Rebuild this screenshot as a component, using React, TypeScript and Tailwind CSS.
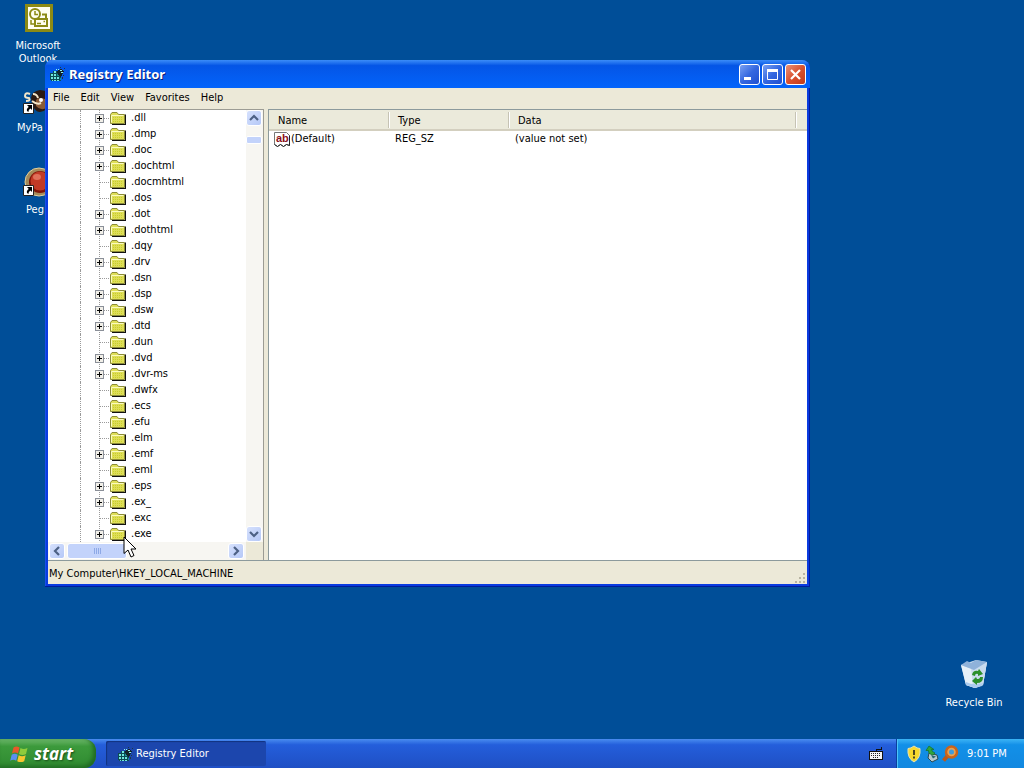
import React from "react";

const keys: [string, boolean][] = [
  [".dll", true],
  [".dmp", true],
  [".doc", true],
  [".dochtml", true],
  [".docmhtml", false],
  [".dos", false],
  [".dot", true],
  [".dothtml", true],
  [".dqy", false],
  [".drv", true],
  [".dsn", false],
  [".dsp", true],
  [".dsw", true],
  [".dtd", true],
  [".dun", false],
  [".dvd", true],
  [".dvr-ms", true],
  [".dwfx", false],
  [".ecs", false],
  [".efu", false],
  [".elm", false],
  [".emf", true],
  [".eml", false],
  [".eps", true],
  [".ex_", true],
  [".exc", false],
  [".exe", true],
];

function RegeditIcon() {
  return (
    <svg width="16" height="16" viewBox="0 0 16 16" shapeRendering="crispEdges">
      <path d="M1 6h3V4h5v2h3v8H2v-1H1z" fill="#0b4b53" />
      <path d="M2 7h2v2H2zM5 7h2v2H5zM2 10h2v2H2zM5 10h2v2H5zM8 10h2v2H8zM3 13h1v1H3zM5 13h2v1H5zM8 13h2v1H8zM5 4h2v2H5z" fill="#6fe6dc" />
      <path d="M8 7h2v2H8zM11 8h1v2h-1zM11 11h1v2h-1z" fill="#168f96" />
      <path d="M8 4l4-2 3 2-2 4-2 2-2-2z" fill="#12232b" />
      <path d="M11 3h2v1h-2zM12 5h2v1h-2zM9 2h1v1H9zM7 2h1v1H7z" fill="#8ff1f0" />
      <path d="M15 1h1v1h-1zM11 0h1v1h-1zM14 8h1v1h-1zM13 10h1v2h-1z" fill="#1d3a44" />
    </svg>
  );
}

function FolderIcon() {
  return (
    <svg width="16" height="16" viewBox="0 0 16 16" className="shrink-0">
      <path d="M2 14.5h13.5V4.5" fill="none" stroke="#111" strokeWidth="1.2" />
      <path d="M.5 13.5v-9l1.5-2h5l1.5 2h6v9z" fill="#dede58" stroke="#8b8b38" />
      <path d="M1.5 12.5v-7h12" fill="none" stroke="#fbfbc0" />
      <path d="M3 7.500h10M3 9.500h10M3 11.500h10" stroke="#c9cf2c" strokeDasharray="1 1" />
    </svg>
  );
}

function Branch({ name, open }: { name: string; open: boolean }) {
  const lines = (
    <svg width="15" height="16" viewBox="0 0 15 16" shapeRendering="crispEdges">
      <path d="M4.500 0v16M5 8.500h10" stroke="#9a9a9a" strokeDasharray="1 1" fill="none" />
      {open && (
        <>
          <rect x="0.500" y="4.500" width="8" height="8" fill="#f1efe8" stroke="#8a8f98" />
          <path d="M2 8.500h5M4.500 6v5" stroke="#000" />
        </>
      )}
    </svg>
  );
  return (
    <li className="flex h-4 items-center">
      <span className="ml-8 h-4 w-[15px] shrink-0 border-l border-dotted border-[#9a9a9a]" />
      {open ? <button aria-label={"Expand " + name}>{lines}</button> : lines}
      <FolderIcon />
      <span className="pl-[5px] leading-4">{name}</span>
    </li>
  );
}

function ScrollButton({ label, d }: { label: string; d: string }) {
  return (
    <button
      aria-label={label}
      className="flex size-4 shrink-0 items-center justify-center rounded-[3px] border border-white bg-linear-to-br from-[#d6e1fd] to-[#b5c8f7]"
    >
      <svg width="10" height="10" viewBox="0 0 10 10">
        <path d={d} fill="none" stroke="#4d6185" strokeWidth="2.200" />
      </svg>
    </button>
  );
}

function CaptionButton({ label, red, children }: { label: string; red?: boolean; children: React.ReactNode }) {
  return (
    <button
      aria-label={label}
      className={
        "flex size-[21px] items-center justify-center rounded-[3px] border border-white bg-linear-to-br " +
        (red ? "from-[#e99076] via-[#d9512f] to-[#c2391a]" : "from-[#7aa0f2] via-[#3467e0] to-[#1f4fd0]")
      }
    >
      <svg width="19" height="19" viewBox="0 0 19 19" fill="none" stroke="#fff">
        {children}
      </svg>
    </button>
  );
}

function Shortcut() {
  return (
    <>
      <path d="M1.500 19.500h10v10h-10z" fill="#fff" stroke="#222" />
      <path d="M5 21h5v5l-1.500-1.500C7 25.500 6.500 26.500 6.500 28 4 27 4.500 24.500 6.800 23z" fill="#000" />
    </>
  );
}

function DesktopIcon({ label, children, cut }: { label: string; children: React.ReactNode; cut?: string }) {
  return (
    <button className="flex h-[82px] w-full flex-col items-center gap-1 pt-[2px] leading-[13px] text-white">
      <svg width="32" height="32" viewBox="0 0 32 32" className="shrink-0">
        {children}
      </svg>
      <span className={cut ? "w-full pt-[1px] text-left " + cut : "w-[70px] pt-[1px] text-center"}>{label}</span>
    </button>
  );
}

function RegistryWindow() {
  return (
    <section className="absolute left-[45px] top-[60px] w-[765px] rounded-t-lg bg-[#0a3be0] px-[3px] pb-[3px] shadow-[inset_-1px_-1px_0_#001c9c,inset_1px_0_0_#1a4fe8]">
      <header className="-mx-[3px] flex h-7 items-center gap-1 rounded-t-lg bg-linear-to-b from-[#3b8cf8] via-[#0455e6] via-20% to-[#0364fb] px-1 pt-[1px]">
        <RegeditIcon />
        <h1 className="flex-1 pt-[1px] font-['Noto_Sans'] text-[13px] font-bold text-white [text-shadow:1px_1px_#0a1f7a]">Registry Editor</h1>
        <div className="flex gap-[2px]">
          <CaptionButton label="Minimize">
            <path d="M4 13.500h7" strokeWidth="3" />
          </CaptionButton>
          <CaptionButton label="Maximize">
            <path d="M4.500 5v9.500h10V5" />
            <path d="M4 5.500h11" strokeWidth="3" />
          </CaptionButton>
          <CaptionButton label="Close" red>
            <path d="M5 5l9 9M14 5l-9 9" strokeWidth="2.200" />
          </CaptionButton>
        </div>
      </header>

      <div className="bg-[#ece9d8]">
        <nav className="flex h-[21px] items-center gap-[11px] px-[5px]">
          {["File", "Edit", "View", "Favorites", "Help"].map((m) => (
            <button key={m}>{m}</button>
          ))}
        </nav>

        <div className="flex gap-1 border-b border-[#8c9a9c]">
          <div className="w-[216px] border-r border-t border-[#9c9c94] bg-white">
            <div className="flex">
              <ul className="flex-1 overflow-hidden">
                {keys.map(([name, open]) => (
                  <Branch key={name} name={name} open={open} />
                ))}
              </ul>
              <div className="flex w-[17px] flex-col bg-[#f7f6f2]">
                <ScrollButton label="Scroll up" d="M1 7l4-4 4 4" />
                <div className="flex-1 pt-[10px]">
                  <div className="h-2 w-4 rounded-[2px] border border-white bg-[#c3d3fb]" />
                </div>
                <ScrollButton label="Scroll down" d="M1 3l4 4 4-4" />
              </div>
            </div>
            <div className="flex h-[18px]">
              <div className="flex flex-1 items-center bg-[#f7f6f2] pl-[1px] pr-[2px]">
                <ScrollButton label="Scroll left" d="M7 1L3 5l4 4" />
                <div className="ml-[2px] flex h-4 w-[60px] items-center justify-center gap-[1px] rounded-[3px] border border-white bg-[#c3d3fb]">
                  {[0, 1, 2, 3].map((i) => (
                    <span key={i} className="h-[6px] w-[1px] bg-[#8ea9e6]" />
                  ))}
                </div>
                <span className="flex-1" />
                <ScrollButton label="Scroll right" d="M3 1l4 4-4 4" />
              </div>
              <div className="w-[17px] bg-[#ece9d8]" />
            </div>
          </div>

          <div className="flex-1 border-l border-t border-[#8c9a9c] bg-white">
            <table className="w-full table-fixed">
              <colgroup>
                <col className="w-[120px]" />
                <col className="w-[120px]" />
                <col />
                <col className="w-[11px]" />
              </colgroup>
              <thead>
                <tr className="h-5 border-b-2 border-[#d3cfbf] bg-[#ebeadb] text-left">
                  {["Name", "Type", "Data"].map((h) => (
                    <th key={h} scope="col" className="p-0 font-normal">
                      <div className="h-4 border-r border-[#c6c3b4] pl-[9px] leading-[17px] shadow-[1px_0_#fff]">{h}</div>
                    </th>
                  ))}
                  <td />
                </tr>
              </thead>
              <tbody>
                <tr className="h-[18px]">
                  <td className="p-0">
                    <div className="flex items-center pl-[5px]">
                      <svg width="17" height="16" viewBox="0 0 17 16">
                        <path d="M.500.500h12l3 3v10l-3-1-3 2-3-2-3 2-3-2z" fill="#fff" stroke="#777" />
                        <path d="M15.500 3.500v10l-3-1-3 2-3-2-3 2-3-2" fill="none" stroke="#222" />
                        <text x="2" y="10" fontSize="11" fontWeight="bold" fill="#8b1020" fontFamily="Liberation Sans">ab</text>
                      </svg>
                      (Default)
                    </div>
                  </td>
                  <td className="p-0 pl-[6px]">REG_SZ</td>
                  <td className="p-0 pl-[6px]">(value not set)</td>
                  <td />
                </tr>
              </tbody>
            </table>
          </div>
        </div>

        <footer className="flex h-[23px] items-center justify-between pl-[1px]">
          <span className="pt-1">My Computer\HKEY_LOCAL_MACHINE</span>
          <svg width="12" height="12" viewBox="0 0 12 12" className="self-end" fill="#b8b4a2">
            <path d="M8 1h2v2H8zM8 5h2v2H8zM4 5h2v2H4zM8 9h2v2H8zM4 9h2v2H4zM0 9h2v2H0z" />
          </svg>
        </footer>
      </div>
    </section>
  );
}

function Taskbar() {
  return (
    <footer className="flex h-[29px] shrink-0 items-stretch bg-linear-to-b from-[#4a8cf0] via-[#245edb] via-20% to-[#1f4fc4] text-white">
      <button className="flex w-24 items-center gap-1 rounded-r-xl bg-linear-to-b from-[#6bb76a] via-[#3c9a3c] via-25% to-[#2f8a30] pl-[10px] shadow-[inset_-3px_-2px_4px_#206a22]">
        <svg width="20" height="18" viewBox="0 0 20 18">
          <path d="M3.500 2.500Q6.500.5 9.500 2.500L8 8.500Q5 6.500 2 8.500z" fill="#e8582a" />
          <path d="M10.500 3Q13.500 5 17.500 3L16 9Q12.500 11 9 9z" fill="#8ecb3c" />
          <path d="M1.700 9.700Q4.700 7.700 7.700 9.700L6.200 15.700Q3.200 13.700.2 15.700z" fill="#5b8ff0" />
          <path d="M8.700 10.200Q12 12.200 15.700 10.200L14.200 16.200Q10.700 18 7.200 16.200z" fill="#f7c62f" />
        </svg>
        <span className="font-['Open_Sans'] text-[17px] font-bold italic leading-[20px] [text-shadow:1px_1px_2px_#174d18]">start</span>
      </button>
      <button className="my-[2px] ml-[10px] flex w-40 items-center gap-[3px] rounded-[2px] bg-[#1c46ad] pl-[11px] pt-[2px] shadow-[inset_1px_1px_1px_#12327f]">
        <RegeditIcon />
        Registry Editor
      </button>
      <span className="flex-1" />
      <button aria-label="Keyboard" className="mr-[13px]">
        <svg width="14" height="14" viewBox="0 0 14 14" shapeRendering="crispEdges">
          <path d="M7 4V2h5V0" fill="none" stroke="#111" />
          <path d="M0 4h14v9H0z" fill="#111" />
          <path d="M1 5h12v7H1z" fill="#f4f4f4" />
          <path d="M2 6.500h10M2 8.500h10M4 10.500h6" stroke="#222" strokeDasharray="1 1" />
        </svg>
      </button>
      <div className="flex w-32 items-center border-l border-[#0b3f9e] bg-linear-to-b from-[#3bb4f5] via-[#1290e8] via-20% to-[#1288e0] pl-2 shadow-[inset_1px_0_#4cc4fa]">
        <svg width="18" height="18" viewBox="0 0 18 18">
          <path d="M9 1Q12 3.500 15 3.500 16 13 9 17 2 13 3 3.500 6 3.500 9 1z" fill="#f8d92e" stroke="#e8e2b0" />
          <path d="M9 5v5M9 11.500v2" stroke="#222" strokeWidth="1.600" />
        </svg>
        <svg width="18" height="18" viewBox="0 0 18 18">
          <path d="M6 8l8 2 1 4-6 3-4-4z" fill="#b7c9cf" stroke="#2c4a50" />
          <path d="M8 10l5 1.500-3 2z" fill="#2a6670" />
          <path d="M10 10Q5 9 5.500 5.500H3L6 1l5 3.500H8.500Q9 7 12 8z" fill="#2fa43c" stroke="#167024" strokeWidth=".7" />
        </svg>
        <svg width="18" height="18" viewBox="0 0 18 18" fill="none">
          <path d="M7 10.500l-4.500 5" stroke="#b9591c" strokeWidth="4" />
          <circle cx="10.500" cy="7" r="5.500" fill="#e8a252" stroke="#c9641c" strokeWidth="2.500" />
          <circle cx="10.500" cy="7" r="2.500" fill="#3f9bdc" />
        </svg>
        <time className="whitespace-nowrap pl-[8px] pt-[1px]">9:01 PM</time>
      </div>
    </footer>
  );
}

export default function App() {
  return (
    <div className="flex h-screen flex-col overflow-hidden bg-[#004e98] font-['DejaVu_Sans_Condensed','Noto_Sans',sans-serif] text-[11px] text-black">
      <main className="relative flex-1">
        <div className="flex w-[76px] flex-col">
          <DesktopIcon label="Microsoft Outlook">
            <path d="M3 2h28v28H3z" fill="#8c8a14" />
            <path d="M6 5h22v22H6z" fill="#fffef0" />
            <path d="M13 17h12v7H13z" fill="none" stroke="#8c8a14" strokeWidth="2" />
            <path d="M20 12.500h4V17" fill="none" stroke="#8c8a14" strokeWidth="2" />
            <circle cx="13" cy="12" r="5" fill="#fffef0" stroke="#8c8a14" strokeWidth="2" />
            <path d="M13 9v3.500h3" fill="none" stroke="#8c8a14" strokeWidth="1.500" />
            <path d="M9 18v4h3M15 21.500h4M21.500 19.500h1.500" fill="none" stroke="#8c8a14" strokeWidth="1.500" />
          </DesktopIcon>
          <DesktopIcon label="MyPa" cut="pl-[17px]">
            <path d="M9 14Q10 7 18 6 28 6 29 16 28 26 18 28 11 28 9 14z" fill="#2c1a12" />
            <path d="M14 16Q17 12 25 16L25 24Q18 27 14 22z" fill="#8a5a36" />
            <path d="M8 10Q3 8 3 12 3 14 7 14 9 17 4 17M11 10q4 0 5 4M10 17q5 4 9 2" fill="none" stroke="#f3e6ca" strokeWidth="2" />
            <circle cx="19" cy="16" r="2" fill="#fff" />
            <Shortcut />
          </DesktopIcon>
          <DesktopIcon label="Peg" cut="pl-[26px]">
            <circle cx="17" cy="16" r="14" fill="#a58a5a" stroke="#e0cf9a" />
            <circle cx="18" cy="16" r="11" fill="#7d1508" />
            <circle cx="18" cy="15" r="9.500" fill="#c23a26" />
            <ellipse cx="15" cy="11" rx="4" ry="3" fill="#e0705a" />
            <Shortcut />
          </DesktopIcon>
        </div>

        <div className="absolute bottom-0 right-3 w-[76px]">
          <DesktopIcon label="Recycle Bin">
            <path d="M3 6L18 1l11 2-4 23-8 3-9-3z" fill="#c9dcee" />
            <path d="M3 6l8 3 18-6-4 23-8 3-9-3z" fill="#e6f0f8" />
            <path d="M13 9l16-6-4 23-10 3z" fill="#bcd2ea" opacity=".7" />
            <path d="M3 6L9 2l4 2 5-3 11 2-13 8z" fill="#8fb2da" />
            <path d="M8 23q8 4 17 1l-1 3-7 2-9-3z" fill="#aacbef" />
            <path d="M14 16q1-5 6-4l1-2 4 5-5 2v-2q-3-1-3 2zM25 18q0 6-6 6v2l-5-4 4-4 1 2q3 0 3-2z" fill="#2b8f2a" />
          </DesktopIcon>
        </div>

        <RegistryWindow />

        <svg width="14" height="22" viewBox="0 0 14 22" className="pointer-events-none absolute left-[123px] top-[536px]">
          <path d="M1 1v16.500l4-3.500 3 7 3-1.500-3-6.500h5z" fill="#fff" stroke="#000" />
        </svg>
      </main>
      <Taskbar />
    </div>
  );
}
